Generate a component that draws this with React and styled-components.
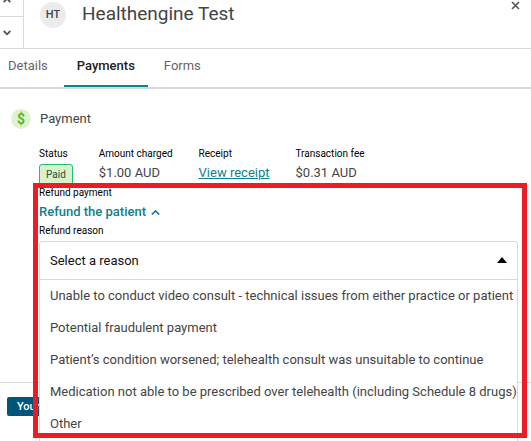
import React, { useState } from "react";
import styled, { createGlobalStyle } from "styled-components";

const fields = [
  { id: "status", label: "Status", type: "badge", value: "Paid" },
  { id: "amount", label: "Amount charged", type: "text", value: "$1.00 AUD" },
  { id: "receipt", label: "Receipt", type: "link", value: "View receipt" },
  { id: "fee", label: "Transaction fee", type: "text", value: "$0.31 AUD" },
];

const reasons = [
  "Unable to conduct video consult - technical issues from either practice or patient",
  "Potential fraudulent payment",
  "Patient’s condition worsened; telehealth consult was unsuitable to continue",
  "Medication not able to be prescribed over telehealth (including Schedule 8 drugs)",
  "Other",
];

const tabs = ["Details", "Payments", "Forms"];

const GlobalStyle = createGlobalStyle`
  * {
    box-sizing: border-box;
  }
  body {
    margin: 0;
    background: #fff;
    color: #444;
    font-family: Roboto, "Liberation Sans", sans-serif;
    font-size: 13px;
    line-height: 20px;
  }
  button, select {
    font: inherit;
    color: inherit;
    background: none;
    border: none;
    padding: 0;
    margin: 0;
    cursor: pointer;
  }
`;
const StyledPage = styled.div`
  display: flex;
  flex-direction: column;
  height: 100vh;
  overflow: hidden;
`;
const StyledHeader = styled.header`
  display: flex;
  border-bottom: 1px solid #d9d9d9;
`;
// the stepper is scrolled half a button past the top edge
const StyledStepper = styled.div`
  display: flex;
  flex-direction: column;
  width: 24px;
  margin-top: -16px;
  border-right: 1px solid #d9d9d9;
`;
const StyledStep = styled.button`
  display: flex;
  align-items: center;
  justify-content: center;
  height: 32px;
  padding-right: 10px;
  color: #555;
  & + & {
    border-top: 1px solid #d9d9d9;
  }
`;
const StyledPerson = styled.div`
  display: flex;
  flex: 1;
  align-items: flex-start;
  gap: 16px;
  padding: 0 11px 0 16px;
`;
const StyledAvatar = styled.span`
  width: 26px;
  height: 26px;
  margin-top: 2px;
  border-radius: 50%;
  background: #ececec;
  font-size: 11px;
  font-weight: 500;
  line-height: 26px;
  text-align: center;
`;
const StyledName = styled.h1`
  flex: 1;
  margin: 0;
  font-size: 19px;
  font-weight: 400;
  line-height: 28px;
`;
const StyledClose = styled.button`
  display: flex;
  margin-top: 1px;
  color: #555;
`;
const StyledTabs = styled.nav`
  display: flex;
  gap: 3px;
  height: 40px;
  border-bottom: 2px solid #d9d9d9;
`;
const StyledTab = styled.a`
  padding: 7px 13px 0;
  border-bottom: 2px solid ${(props) => (props.$active ? "#008a90" : "transparent")};
  color: ${(props) => (props.$active ? "#222" : "#666")};
  font-weight: ${(props) => (props.$active ? 500 : 400)};
  text-decoration: none;
  &:first-child {
    padding-left: 8px;
  }
`;
const StyledMain = styled.main`
  flex: 1;
  padding: 20px 13px 0 11px;
`;
const StyledTitle = styled.h2`
  display: flex;
  align-items: center;
  gap: 9px;
  margin: 0 0 16px;
  font-size: 13px;
  font-weight: 400;
`;
const StyledDollar = styled.span`
  width: 20px;
  height: 20px;
  border-radius: 50%;
  background: #dff2d0;
  color: #4db61c;
  font-size: 14px;
  font-weight: 600;
  text-align: center;
`;
const StyledBody = styled.div`
  padding-left: 28px;
`;
const StyledFields = styled.dl`
  display: flex;
  gap: 26px;
  height: 39px;
  margin: 0;
`;
const StyledLabel = styled.dt`
  color: #000;
  font-size: 10px;
  line-height: 18px;
`;
const StyledValue = styled.dd`
  margin: 0;
`;
const StyledBadge = styled.span`
  display: inline-block;
  margin-top: 1px;
  padding: 0 6px;
  border: 1px solid #1fbf75;
  border-radius: 3px;
  background: #daf2cc;
  color: #285030;
  font-size: 10px;
`;
const StyledLink = styled.a`
  color: #11808a;
`;
const StyledCaption = styled.label`
  display: block;
  color: #000;
  font-size: 10px;
  line-height: 18px;
`;
const StyledRefund = styled.section`
  position: relative;
`;
const StyledToggle = styled.button`
  display: flex;
  align-items: center;
  gap: 5px;
  height: 20px;
  color: #11808a;
  font-weight: 500;
`;
const StyledDropdown = styled.div`
  position: relative;
  margin-top: 1px;
`;
const StyledSelect = styled.select`
  display: block;
  width: 100%;
  height: 39px;
  padding: 0 10px;
  border: 1px solid #d9d9d9;
  border-radius: 3px 3px 0 0;
  color: #111;
  appearance: none;
`;
// lies over the right end of the select
const StyledArrow = styled.svg`
  position: absolute;
  top: 16px;
  right: 11px;
  pointer-events: none;
`;
const StyledList = styled.ul`
  position: absolute;
  top: 100%;
  left: 0;
  right: 0;
  margin: 0;
  padding: 0 0 10px;
  border: 1px solid #d9d9d9;
  border-top: none;
  background: #fff;
  list-style: none;
`;
const StyledOption = styled.li`
  padding: 0 10px;
  line-height: 32px;
  white-space: nowrap;
  cursor: pointer;
`;
// red marker drawn over the refund part of the panel
const StyledMarker = styled.div`
  position: absolute;
  top: -1px;
  left: -6px;
  right: -9px;
  height: 255px;
  border: 5px solid #ed1c24;
  pointer-events: none;
`;
const StyledFooter = styled.footer`
  height: 59px;
  padding: 13px 7px;
  border-top: 1px solid #d9d9d9;
`;
const StyledFooterButton = styled.button`
  height: 19px;
  padding: 0 10px;
  border-radius: 2px;
  background: #00567a;
  color: #fff;
  font-size: 11px;
  font-weight: 500;
  line-height: 19px;
`;

function Chevron({ up, size = 8, width = 1.8 }) {
  return (
    <svg width={size} height={size * 0.75} viewBox="0 0 8 6" fill="none">
      <path
        d={up ? "M0.7 5 4 1.7 7.3 5" : "M0.7 1 4 4.3 7.3 1"}
        stroke="currentColor"
        strokeWidth={width}
      />
    </svg>
  );
}

function Value({ item }) {
  if (item.type === "badge") return <StyledBadge>{item.value}</StyledBadge>;
  if (item.type === "link")
    return <StyledLink href="#receipt">{item.value}</StyledLink>;
  return item.value;
}

function Refund() {
  const [open, setOpen] = useState(true);
  const [reason, setReason] = useState("");

  const toggle = (e) => {
    e.preventDefault();
    setOpen(!open);
  };
  const pick = (text) => {
    setReason(text);
    setOpen(false);
  };

  return (
    <StyledRefund>
      <StyledCaption as="div">Refund payment</StyledCaption>
      <StyledToggle type="button" aria-expanded="true">
        Refund the patient <Chevron up size={9} width={1.4} />
      </StyledToggle>
      <StyledCaption htmlFor="reason">Refund reason</StyledCaption>
      <StyledDropdown>
        <StyledSelect
          id="reason"
          value={reason}
          onMouseDown={toggle}
          onChange={(e) => setReason(e.target.value)}
        >
          <option value="">Select a reason</option>
          {reasons.map((text) => (
            <option key={text}>{text}</option>
          ))}
        </StyledSelect>
        <StyledArrow width="10" height="6" viewBox="0 0 10 6">
          <path d="M5 0 10 6H0Z" fill="#000" />
        </StyledArrow>
        {open && (
          <StyledList role="listbox" aria-label="Refund reason">
            {reasons.map((text) => (
              <StyledOption
                key={text}
                role="option"
                aria-selected={text === reason}
                onClick={() => pick(text)}
              >
                {text}
              </StyledOption>
            ))}
          </StyledList>
        )}
      </StyledDropdown>
      <StyledMarker />
    </StyledRefund>
  );
}

function App() {
  return (
    <StyledPage>
      <GlobalStyle />
      <StyledHeader>
        <StyledStepper>
          <StyledStep type="button" aria-label="Previous">
            <Chevron up />
          </StyledStep>
          <StyledStep type="button" aria-label="Next">
            <Chevron />
          </StyledStep>
        </StyledStepper>
        <StyledPerson>
          <StyledAvatar>HT</StyledAvatar>
          <StyledName>Healthengine Test</StyledName>
          <StyledClose type="button" aria-label="Close">
            <svg width="9" height="9" viewBox="0 0 9 9">
              <path d="M1 1 8 8M8 1 1 8" stroke="currentColor" strokeWidth="1.6" />
            </svg>
          </StyledClose>
        </StyledPerson>
      </StyledHeader>
      <StyledTabs>
        {tabs.map((tab) => (
          <StyledTab key={tab} href={`#${tab}`} $active={tab === "Payments"}>
            {tab}
          </StyledTab>
        ))}
      </StyledTabs>
      <StyledMain>
        <StyledTitle>
          <StyledDollar>$</StyledDollar>
          Payment
        </StyledTitle>
        <StyledBody>
          <StyledFields>
            {fields.map((item) => (
              <div key={item.id}>
                <StyledLabel>{item.label}</StyledLabel>
                <StyledValue>
                  <Value item={item} />
                </StyledValue>
              </div>
            ))}
          </StyledFields>
          <Refund />
        </StyledBody>
      </StyledMain>
      <StyledFooter>
        <StyledFooterButton type="button">Your</StyledFooterButton>
      </StyledFooter>
    </StyledPage>
  );
}

export default App;
